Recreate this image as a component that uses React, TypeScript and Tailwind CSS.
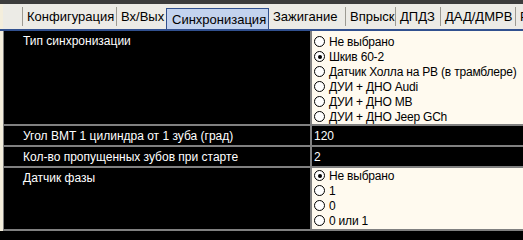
import React from 'react';

const tabs = [
  { label: 'Конфигурация', w: 'w-[94px]' },
  { label: 'Вх/Вых', w: 'w-[50px]' },
  { label: 'Синхронизация', w: 'w-[103px]', active: true },
  { label: 'Зажигание', w: 'w-[76px]' },
  { label: 'Впрыск', w: 'w-[50px]' },
  { label: 'ДПДЗ', w: 'w-[45px]' },
  { label: 'ДАД/ДМРВ', w: 'w-[75px]' },
  { label: 'РХХ', w: 'w-[40px]' },
];

const Radio = ({ label, checked }: { label: string; checked?: boolean }) => (
  <div className="flex h-[15px] items-center">
    <span className="ml-[2px] flex h-[11px] w-[11px] shrink-0 items-center justify-center rounded-full border border-black bg-white">
      {checked && <span className="h-[4px] w-[4px] rounded-full bg-black" />}
    </span>
    <span className="ml-[4px] whitespace-nowrap leading-none tracking-[-0.2px]">{label}</span>
  </div>
);

const Row = ({
  label,
  children,
  value,
  h,
}: {
  label: string;
  children?: React.ReactNode;
  value?: string;
  h: string;
}) => (
  <div className={`flex border-b-2 border-[#808080] ${h}`}>
    <div className="flex-1 bg-black pl-[19px] text-white">
      <div className={children ? 'pt-[3px] leading-[15px]' : 'flex h-full items-center'}>{label}</div>
    </div>
    <div className="w-[213px] shrink-0 overflow-hidden border-l-2 border-[#808080]">
      {children ? (
        <div className="h-full bg-[#fffaef] text-black">{children}</div>
      ) : (
        <div className="flex h-full items-center bg-black pl-[2px] text-white">{value}</div>
      )}
    </div>
  </div>
);

export default function App() {
  return (
    <div className="h-[240px] w-[523px] overflow-hidden bg-black text-[12px]" style={{ fontFamily: '"Liberation Sans", Arial, sans-serif' }}>
      <div className="h-[4px] bg-[#3c3c3c]" />
      <div className="flex h-[25px] overflow-hidden bg-[#ecebe6]">
        <div className="w-[3px] shrink-0 bg-[#f4eedc]" />
        <div className="w-[19px] shrink-0" />
        {tabs.map((t, i) =>
          t.active ? (
            <div
              key={t.label}
              className={`${t.w} mt-[4px] shrink-0 border border-b-0 border-[#31508f] bg-[#c3d3ee] pl-[5px] pt-[3px] text-[13px] leading-[15px] text-black`}
            >
              {t.label}
            </div>
          ) : (
            <div key={t.label} className={`${t.w} flex shrink-0 items-center`}>
              {!(i > 0 && tabs[i - 1].active) && <div className="h-[19px] w-px shrink-0 bg-[#9c9a92]" />}
              <span className="pl-[4px] pt-[1px] text-[13px] text-black whitespace-nowrap">{t.label}</span>
            </div>
          )
        )}
      </div>
      <div className="h-[2px] bg-[#31508f]" />
      <div className="flex">
        <div className="w-[3px] shrink-0 bg-[#f4eedc]" />
        <div className="flex-1 border-l border-[#808080]">
          <Row label="Тип синхронизации" h="h-[95px]">
            <div className="pt-[3px]">
              <Radio label="Не выбрано" />
              <Radio label="Шкив 60-2" checked />
              <Radio label="Датчик Холла на РВ (в трамблере)" />
              <Radio label="ДУИ + ДНО Audi" />
              <Radio label="ДУИ + ДНО MB" />
              <Radio label="ДУИ + ДНО Jeep GCh" />
            </div>
          </Row>
          <Row label="Угол ВМТ 1 цилиндра от 1 зуба (град)" value="120" h="h-[21px]" />
          <Row label="Кол-во пропущенных зубов при старте" value="2" h="h-[21px]" />
          <Row label="Датчик фазы" h="h-[63px]">
            <Radio label="Не выбрано" checked />
            <Radio label="1" />
            <Radio label="0" />
            <Radio label="0 или 1" />
          </Row>
        </div>
      </div>
    </div>
  );
}
